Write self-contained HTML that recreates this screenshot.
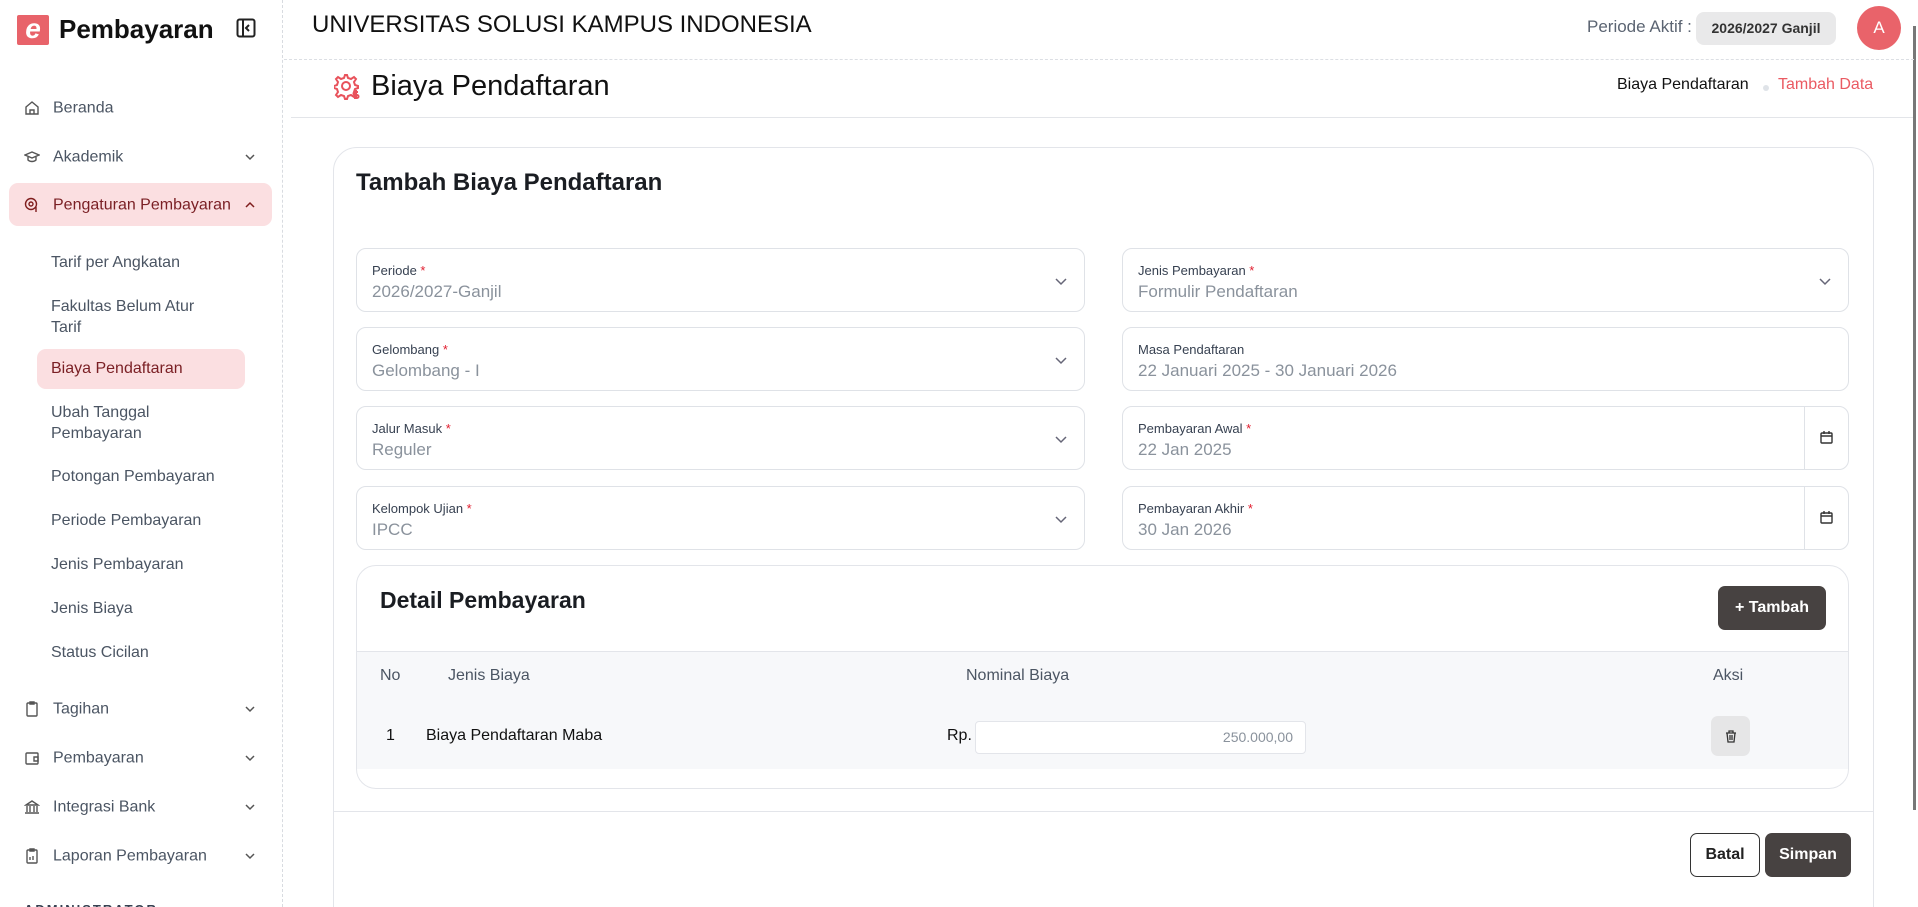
<!DOCTYPE html>
<html><head><meta charset="utf-8"><style>
*{box-sizing:border-box;margin:0;padding:0}
html,body{width:1918px;height:907px;overflow:hidden}
body{background:#fff;font-family:"Liberation Sans",sans-serif;color:#1f2937}
#w{position:relative;width:1918px;height:907px;overflow:hidden}
.a{position:absolute}
.side{left:0;top:0;width:283px;height:907px;border-right:1px dashed #d8dbe0}
.si{position:absolute;left:53px;font-size:16px;color:#4b5563;transform:translateY(-50%);line-height:21px}
.sub{position:absolute;left:51px;font-size:16px;color:#4b5563;line-height:21px}
.ic{position:absolute;left:24px;width:16px;height:16px;transform:translateY(-50%)}
.chev{position:absolute;left:243px;width:14px;height:14px;transform:translateY(-50%)}
.field{position:absolute;border:1px solid #dfe2e7;border-radius:10px;height:64px}
.field .l{position:absolute;left:15px;top:14px;font-size:13px;color:#374151}
.field .l b{color:#e11d2e;font-weight:normal}
.field .v{position:absolute;left:15px;top:33px;font-size:17px;color:#8a929c}
.field svg.dd{position:absolute;right:16px;top:25px}
.cal{position:absolute;right:0;top:0;width:44px;height:62px;border-left:1px solid #dfe2e7}
.cal svg{position:absolute;left:15px;top:24px}
</style></head><body><div id="w">

<div class="a side">
  <div class="a" style="left:17px;top:15px;width:32px;height:30px;background:#e8636a;border-radius:2px;color:#fff;font-weight:bold;font-size:28px;line-height:28px;text-align:center;font-style:italic">e</div>
  <div class="a" style="left:59px;top:14px;font-size:26px;font-weight:bold;color:#111">Pembayaran</div>
  <svg class="a" style="left:236px;top:18px" width="20" height="20" viewBox="0 0 20 20" fill="none" stroke="#222" stroke-width="2"><rect x="1.5" y="1.5" width="17" height="17" rx="2"/><line x1="7" y1="2" x2="7" y2="18"/><path d="M13 7l-3 3 3 3"/></svg>

  <svg class="ic" style="top:108px" viewBox="0 0 16 16" fill="none" stroke="#555" stroke-width="1.4"><path d="M2 7l6-5 6 5v7H2z M6 14v-4h4v4"/></svg>
  <div class="si" style="top:108px">Beranda</div>
  <svg class="ic" style="top:157px" viewBox="0 0 16 16" fill="none" stroke="#555" stroke-width="1.4"><path d="M1 6l7-3 7 3-7 3z M4 8v3c2 2 6 2 8 0V8"/></svg>
  <div class="si" style="top:157px">Akademik</div>
  <svg class="chev" style="top:157px" viewBox="0 0 14 14" fill="none" stroke="#555" stroke-width="1.5"><path d="M3 5l4 4 4-4"/></svg>

  <div class="a" style="left:9px;top:183px;width:263px;height:43px;background:#fbdfe1;border-radius:9px"></div>
  <svg class="ic" style="top:205px" viewBox="0 0 16 16" fill="none" stroke="#7f1d1d" stroke-width="1.4"><circle cx="7" cy="7" r="5.5"/><circle cx="7" cy="7" r="2"/><path d="M12 10v5"/></svg>
  <div class="si" style="top:205px;color:#7a1f24">Pengaturan Pembayaran</div>
  <svg class="chev" style="top:205px" viewBox="0 0 14 14" fill="none" stroke="#7f1d1d" stroke-width="1.5"><path d="M3 9l4-4 4 4"/></svg>

  <div class="sub" style="top:252px">Tarif per Angkatan</div>
  <div class="sub" style="top:296px">Fakultas Belum Atur<br>Tarif</div>
  <div class="a" style="left:37px;top:349px;width:208px;height:40px;background:#fbdfe1;border-radius:9px"></div>
  <div class="sub" style="top:358px;color:#7a1f24">Biaya Pendaftaran</div>
  <div class="sub" style="top:402px">Ubah Tanggal<br>Pembayaran</div>
  <div class="sub" style="top:466px">Potongan Pembayaran</div>
  <div class="sub" style="top:510px">Periode Pembayaran</div>
  <div class="sub" style="top:554px">Jenis Pembayaran</div>
  <div class="sub" style="top:598px">Jenis Biaya</div>
  <div class="sub" style="top:642px">Status Cicilan</div>

  <svg class="ic" style="top:709px" viewBox="0 0 16 16" fill="none" stroke="#555" stroke-width="1.4"><rect x="3" y="2" width="10" height="13" rx="1"/><path d="M6 1h4v2H6z"/></svg>
  <div class="si" style="top:709px">Tagihan</div>
  <svg class="chev" style="top:709px" viewBox="0 0 14 14" fill="none" stroke="#555" stroke-width="1.5"><path d="M3 5l4 4 4-4"/></svg>
  <svg class="ic" style="top:758px" viewBox="0 0 16 16" fill="none" stroke="#555" stroke-width="1.4"><rect x="2" y="3" width="12" height="11" rx="1"/><path d="M10 7h4v4h-4z"/></svg>
  <div class="si" style="top:758px">Pembayaran</div>
  <svg class="chev" style="top:758px" viewBox="0 0 14 14" fill="none" stroke="#555" stroke-width="1.5"><path d="M3 5l4 4 4-4"/></svg>
  <svg class="ic" style="top:807px" viewBox="0 0 16 16" fill="none" stroke="#555" stroke-width="1.4"><path d="M2 6l6-4 6 4z M3 7v6 M6 7v6 M10 7v6 M13 7v6 M1 14h14"/></svg>
  <div class="si" style="top:807px">Integrasi Bank</div>
  <svg class="chev" style="top:807px" viewBox="0 0 14 14" fill="none" stroke="#555" stroke-width="1.5"><path d="M3 5l4 4 4-4"/></svg>
  <svg class="ic" style="top:856px" viewBox="0 0 16 16" fill="none" stroke="#555" stroke-width="1.4"><rect x="3" y="2" width="10" height="13" rx="1"/><path d="M6 1h4v2H6z M6 12V9 M9 12V8"/></svg>
  <div class="si" style="top:856px">Laporan Pembayaran</div>
  <svg class="chev" style="top:856px" viewBox="0 0 14 14" fill="none" stroke="#555" stroke-width="1.5"><path d="M3 5l4 4 4-4"/></svg>
  <div class="a" style="left:24px;top:902px;font-size:13px;font-weight:bold;letter-spacing:2px;color:#374151">ADMINISTRATOR</div>
</div>

<div class="a" style="left:312px;top:11px;font-size:24px;color:#111">UNIVERSITAS SOLUSI KAMPUS INDONESIA</div>
<div class="a" style="left:1587px;top:17px;font-size:17px;color:#5b6472">Periode Aktif :</div>
<div class="a" style="left:1696px;top:12px;width:140px;height:33px;background:#e9e9ea;border-radius:8px;font-size:14px;font-weight:bold;color:#333;text-align:center;line-height:33px">2026/2027 Ganjil</div>
<div class="a" style="left:1857px;top:6px;width:44px;height:44px;border-radius:50%;background:#e9636a;color:#fff;font-size:17px;text-align:center;line-height:44px">A</div>
<div class="a" style="left:1913px;top:26px;width:3px;height:784px;background:#777"></div>
<div class="a" style="left:284px;top:59px;width:1630px;border-top:1px dashed #dcdfe4"></div>

<svg class="a" style="left:334px;top:73px" width="26" height="28" viewBox="0 0 26 28" fill="none" stroke="#e8525b" stroke-width="2"><path d="M11 2l2 0 1 3 3 1 3-2 2 2-2 3 1 3 3 1v2l-3 1-1 3 2 3-2 2-3-2-3 1-1 3h-2l-1-3-3-1-3 2-2-2 2-3-1-3-3-1v-2l3-1 1-3-2-3 2-2 3 2 3-1z"/><circle cx="12" cy="13" r="4"/><path d="M22 17v9 M24 19h-3a1.5 1.5 0 0 0 0 3h2a1.5 1.5 0 0 1 0 3h-3"/></svg>
<div class="a" style="left:371px;top:70px;font-size:29px;color:#111">Biaya Pendaftaran</div>
<div class="a" style="left:1617px;top:76px;font-size:16px;color:#111">Biaya Pendaftaran</div>
<div class="a" style="left:1763px;top:85px;width:6px;height:6px;border-radius:50%;background:#dfe3e8"></div>
<div class="a" style="left:1778px;top:76px;font-size:16px;color:#ea5a62">Tambah Data</div>
<div class="a" style="left:291px;top:117px;width:1622px;border-top:1px solid #e3e5e9"></div>

<div class="a" style="left:333px;top:147px;width:1541px;height:820px;border:1px solid #e3e5ea;border-radius:24px"></div>
<div class="a" style="left:356px;top:169px;font-size:24px;font-weight:bold;color:#1a1d22">Tambah Biaya Pendaftaran</div>

<div class="field" style="left:356px;top:248px;width:729px"><div class="l">Periode <b>*</b></div><div class="v">2026/2027-Ganjil</div><svg class="dd" width="14" height="14" viewBox="0 0 14 14" fill="none" stroke="#667" stroke-width="1.5"><path d="M2 5l5 5 5-5"/></svg></div>
<div class="field" style="left:356px;top:327px;width:729px"><div class="l">Gelombang <b>*</b></div><div class="v">Gelombang - I</div><svg class="dd" width="14" height="14" viewBox="0 0 14 14" fill="none" stroke="#667" stroke-width="1.5"><path d="M2 5l5 5 5-5"/></svg></div>
<div class="field" style="left:356px;top:406px;width:729px"><div class="l">Jalur Masuk <b>*</b></div><div class="v">Reguler</div><svg class="dd" width="14" height="14" viewBox="0 0 14 14" fill="none" stroke="#667" stroke-width="1.5"><path d="M2 5l5 5 5-5"/></svg></div>
<div class="field" style="left:356px;top:486px;width:729px"><div class="l">Kelompok Ujian <b>*</b></div><div class="v">IPCC</div><svg class="dd" width="14" height="14" viewBox="0 0 14 14" fill="none" stroke="#667" stroke-width="1.5"><path d="M2 5l5 5 5-5"/></svg></div>

<div class="field" style="left:1122px;top:248px;width:727px"><div class="l">Jenis Pembayaran <b>*</b></div><div class="v">Formulir Pendaftaran</div><svg class="dd" width="14" height="14" viewBox="0 0 14 14" fill="none" stroke="#667" stroke-width="1.5"><path d="M2 5l5 5 5-5"/></svg></div>
<div class="field" style="left:1122px;top:327px;width:727px"><div class="l">Masa Pendaftaran</div><div class="v">22 Januari 2025 - 30 Januari 2026</div></div>
<div class="field" style="left:1122px;top:406px;width:727px"><div class="l">Pembayaran Awal <b>*</b></div><div class="v">22 Jan 2025</div><div class="cal"><svg width="13" height="13" viewBox="0 0 13 13" fill="none" stroke="#333" stroke-width="1.4"><rect x="1" y="2" width="11" height="10" rx="1"/><path d="M1 5h11 M4 0v3 M9 0v3"/></svg></div></div>
<div class="field" style="left:1122px;top:486px;width:727px"><div class="l">Pembayaran Akhir <b>*</b></div><div class="v">30 Jan 2026</div><div class="cal"><svg width="13" height="13" viewBox="0 0 13 13" fill="none" stroke="#333" stroke-width="1.4"><rect x="1" y="2" width="11" height="10" rx="1"/><path d="M1 5h11 M4 0v3 M9 0v3"/></svg></div></div>

<div class="a" style="left:356px;top:565px;width:1493px;height:224px;border:1px solid #e3e5ea;border-radius:20px;overflow:hidden">
  <div class="a" style="left:0;top:85px;width:100%;height:118px;background:#f7f8fa;border-top:1px solid #e3e5ea"></div>
</div>
<div class="a" style="left:380px;top:587px;font-size:23px;font-weight:bold;color:#1a1d22">Detail Pembayaran</div>
<div class="a" style="left:1718px;top:586px;width:108px;height:44px;background:#474241;border-radius:7px;color:#fff;font-size:16px;font-weight:bold;text-align:center;line-height:44px">+ Tambah</div>
<div class="a" style="left:380px;top:667px;font-size:16px;color:#4b5563">No</div>
<div class="a" style="left:448px;top:667px;font-size:16px;color:#4b5563">Jenis Biaya</div>
<div class="a" style="left:966px;top:667px;font-size:16px;color:#4b5563">Nominal Biaya</div>
<div class="a" style="left:1713px;top:667px;font-size:16px;color:#4b5563">Aksi</div>
<div class="a" style="left:386px;top:727px;font-size:16px;color:#111">1</div>
<div class="a" style="left:426px;top:727px;font-size:16px;color:#111">Biaya Pendaftaran Maba</div>
<div class="a" style="left:947px;top:727px;font-size:16px;color:#111">Rp.</div>
<div class="a" style="left:975px;top:721px;width:331px;height:33px;background:#fff;border:1px solid #e3e5ea;border-radius:4px;font-size:14px;color:#8a929c;text-align:right;padding-right:12px;line-height:31px">250.000,00</div>
<div class="a" style="left:1711px;top:716px;width:39px;height:40px;background:#e6e6e7;border-radius:7px"></div>
<svg class="a" style="left:1725px;top:730px" width="12" height="13" viewBox="0 0 12 13" fill="none" stroke="#333" stroke-width="1.3"><path d="M1 3h10 M4 3V1h4v2 M2 3l1 9h6l1-9 M5 5v5 M7 5v5"/></svg>

<div class="a" style="left:334px;top:811px;width:1539px;border-top:1px solid #e3e5ea"></div>
<div class="a" style="left:1690px;top:833px;width:70px;height:44px;border:1px solid #333;border-radius:7px;font-size:16px;font-weight:bold;text-align:center;line-height:42px;color:#222">Batal</div>
<div class="a" style="left:1765px;top:833px;width:86px;height:44px;background:#474241;border-radius:7px;font-size:16px;font-weight:bold;text-align:center;line-height:44px;color:#fff">Simpan</div>
</div></body></html>
